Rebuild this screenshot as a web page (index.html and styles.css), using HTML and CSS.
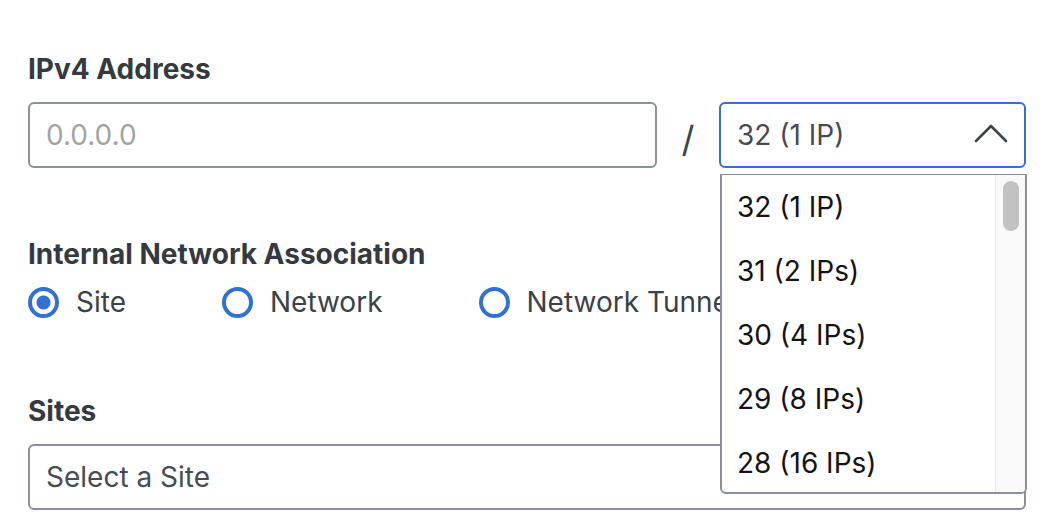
FILE: index.html
```html
<!DOCTYPE html>
<html lang="en">
<head>
<meta charset="utf-8">
<title>IPv4 Address</title>
<link rel="stylesheet" href="styles.css">
</head>
<body>
<form class="form">
  <section class="field field-ip">
    <div class="label">IPv4 Address</div>
    <div class="ip-row">
      <div class="input ip-input"><span class="placeholder">0.0.0.0</span></div>
      <div class="slash">/</div>
      <div class="cidr">
        <div class="select select-open">
          <span class="value">32 (1 IP)</span>
          <svg class="chevron" width="34" height="20" viewBox="0 0 34 20"><path d="M2 18 L17 3 L32 18" fill="none" stroke="#3e444a" stroke-width="2.6" stroke-linecap="round" stroke-linejoin="round"/></svg>
        </div>
        <div class="dropdown">
          <ul class="options">
            <li>32 (1 IP)</li>
            <li>31 (2 IPs)</li>
            <li>30 (4 IPs)</li>
            <li>29 (8 IPs)</li>
            <li>28 (16 IPs)</li>
          </ul>
          <div class="track"><div class="thumb"></div></div>
        </div>
      </div>
    </div>
  </section>

  <section class="field field-assoc">
    <div class="label">Internal Network Association</div>
    <div class="radios">
      <label class="radio"><span class="dot checked"></span><span>Site</span></label>
      <label class="radio"><span class="dot"></span><span>Network</span></label>
      <label class="radio"><span class="dot"></span><span>Network Tunnel</span></label>
    </div>
  </section>

  <section class="field field-sites">
    <div class="label">Sites</div>
    <div class="input site-input"><span class="value">Select a Site</span></div>
  </section>
</form>
</body>
</html>
```

FILE: styles.css
```css
* { box-sizing: border-box; }
html, body { margin: 0; padding: 0; background: #fff; }
body {
  font-family: Inter, "Noto Sans", "Liberation Sans", sans-serif;
  width: 1048px;
  height: 532px;
  overflow: hidden;
}
.form {
  padding: 51px 22px 0 28px;
  display: flex;
  flex-direction: column;
}
.label {
  font-size: 28px;
  font-weight: 700;
  color: #343a40;
  line-height: 36px;
}
.field-ip .label { margin-bottom: 15px; }
.ip-row {
  display: flex;
  align-items: flex-start;
}
.input {
  height: 66px;
  border: 2px solid #8a9199;
  border-radius: 6px;
  display: flex;
  align-items: center;
  padding-left: 16px;
  font-size: 28px;
  background: #fff;
}
.ip-input { width: 629px; }
.placeholder { color: #a3a3a3; }
.value { color: #464c52; }
.slash {
  width: 62px;
  height: 66px;
  display: flex;
  align-items: center;
  justify-content: center;
  font-size: 36px;
  color: #3e444a;
  padding-top: 8px;
}
.cidr {
  position: relative;
  width: 307px;
}
.select {
  height: 66px;
  border: 2px solid #3370d4;
  border-radius: 6px;
  display: flex;
  align-items: center;
  justify-content: space-between;
  padding: 0 16px 0 16px;
  font-size: 28px;
}
.chevron { display: block; margin-top: -4px; }
.dropdown {
  position: absolute;
  z-index: 5;
  top: 72px;
  left: 1px;
  width: 307px;
  height: 320px;
  background: #fff;
  border: 2px solid #8a9199;
  border-top-width: 1px;
  border-radius: 0 0 6px 6px;
  display: flex;
  overflow: hidden;
}
.options {
  list-style: none;
  margin: 0;
  padding: 0 0 0 15px;
  flex: 1;
}
.options li {
  height: 64px;
  line-height: 64px;
  font-size: 28px;
  color: #141414;
}
.track {
  width: 30px;
  background: #f9f9f9;
  border-left: 1px solid #e8e8e8;
  padding: 6px 0 0 7px;
}
.thumb {
  width: 16px;
  height: 50px;
  border-radius: 8px;
  background: #c2c2c2;
}
.field-assoc { margin-top: 68px; }
.radios {
  display: flex;
  gap: 96px;
  margin-top: 13px;
}
.radio {
  display: flex;
  align-items: center;
  gap: 17px;
  font-size: 28px;
  color: #3b4147;
  white-space: nowrap;
}
.dot {
  width: 31px;
  height: 31px;
  border-radius: 50%;
  border: 4px solid #3370d4;
  background: #fff;
  display: inline-block;
  flex: none;
}
.dot.checked {
  background: radial-gradient(circle, #3370d4 0 6.5px, #fff 7.5px);
}
.field-sites { margin-top: 74px; }
.field-sites .label { margin-bottom: 15px; }
.site-input { width: 998px; }
```
